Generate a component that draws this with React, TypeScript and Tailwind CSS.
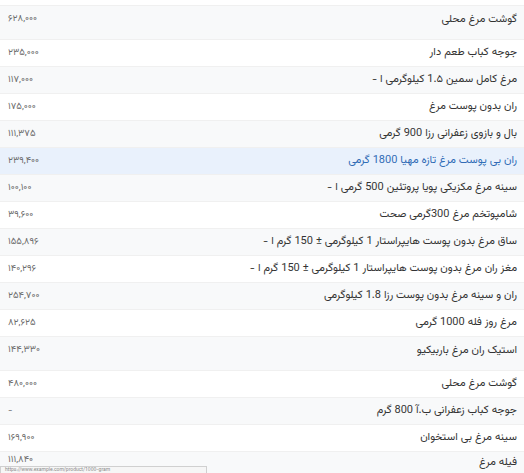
import React from 'react';

type Row = { name: string; price: string; tall?: boolean; active?: boolean; last?: boolean };

const rows: Row[] = [
  { name: 'گوشت مرغ محلی', price: '۶۲۸,۰۰۰', tall: true },
  { name: 'جوجه کباب طعم دار', price: '۲۳۵,۰۰۰' },
  { name: 'مرغ کامل سمین 1.۵ کیلوگرمی ا -', price: '۱۱۷,۰۰۰' },
  { name: 'ران بدون پوست مرغ', price: '۱۷۵,۰۰۰' },
  { name: 'بال و بازوی زعفرانی رزا 900 گرمی', price: '۱۱۱,۳۷۵' },
  { name: 'ران بی پوست مرغ تازه مهیا 1800 گرمی', price: '۲۳۹,۴۰۰', active: true },
  { name: 'سینه مرغ مکزیکی پویا پروتئین 500 گرمی ا -', price: '۱۰۰,۱۰۰' },
  { name: 'شامپوتخم مرغ 300گرمی صحت', price: '۳۹,۶۰۰' },
  { name: 'ساق مرغ بدون پوست هایپراستار 1 کیلوگرمی ± 150 گرم ا -', price: '۱۵۵,۸۹۶' },
  { name: 'مغز ران مرغ بدون پوست هایپراستار 1 کیلوگرمی ± 150 گرم ا -', price: '۱۴۰,۲۹۶' },
  { name: 'ران و سینه مرغ بدون پوست رزا 1.8 کیلوگرمی', price: '۲۵۴,۷۰۰' },
  { name: 'مرغ روز فله 1000 گرمی', price: '۸۲,۶۲۵' },
  { name: 'استیک ران مرغ باربیکیو', price: '۱۴۴,۳۳۰', tall: true },
  { name: 'گوشت مرغ محلی', price: '۴۸۰,۰۰۰' },
  { name: 'جوجه کباب زعفرانی ب.آ 800 گرم', price: '-' },
  { name: 'سینه مرغ بی استخوان', price: '۱۶۹,۹۰۰' },
  { name: 'فیله مرغ', price: '۱۱۱,۸۴۰', last: true },
];

export default function App() {
  return (
    <div
      className="relative h-[473px] w-[524px] overflow-hidden bg-white"
      style={{ fontFamily: 'Vazirmatn, "Noto Sans Arabic", "DejaVu Sans Condensed", "DejaVu Sans", sans-serif' }}
    >
      <div className="mt-[5px] border-t border-[#f0f0f0]">
        {rows.map((r, i) => {
          const bg = r.active ? 'bg-[#e9f1fc]' : i % 2 === 0 ? 'bg-[#f8f9fa]' : 'bg-white';
          const size = r.tall
            ? 'h-[34px] items-start pt-[6px]'
            : r.last
              ? 'h-[27px] items-start pt-[3px]'
              : 'h-[27px] items-center';
          return (
            <div
              key={i}
              dir="rtl"
              className={`flex justify-between border-b border-[#f0f0f0] pl-2 pr-[7px] ${bg} ${size}`}
            >
              <span className={`text-[11px] ${r.active ? 'text-[#2f6bb5]' : 'text-[#333333]'}`}>{r.name}</span>
              <span className={`text-[9.5px] text-[#6b6b6b] ${r.last ? 'leading-[9px]' : 'leading-[14px]'}`}>{r.price}</span>
            </div>
          );
        })}
      </div>
      <div className="absolute left-0 top-[466px] flex h-[7px] w-[207px] items-center border border-b-0 border-[#d0d0d0] bg-[#f6f6f6] px-1">
        <span className="text-[5px] leading-none text-[#888888]">https://www.example.com/product/1000-gram</span>
      </div>
    </div>
  );
}
